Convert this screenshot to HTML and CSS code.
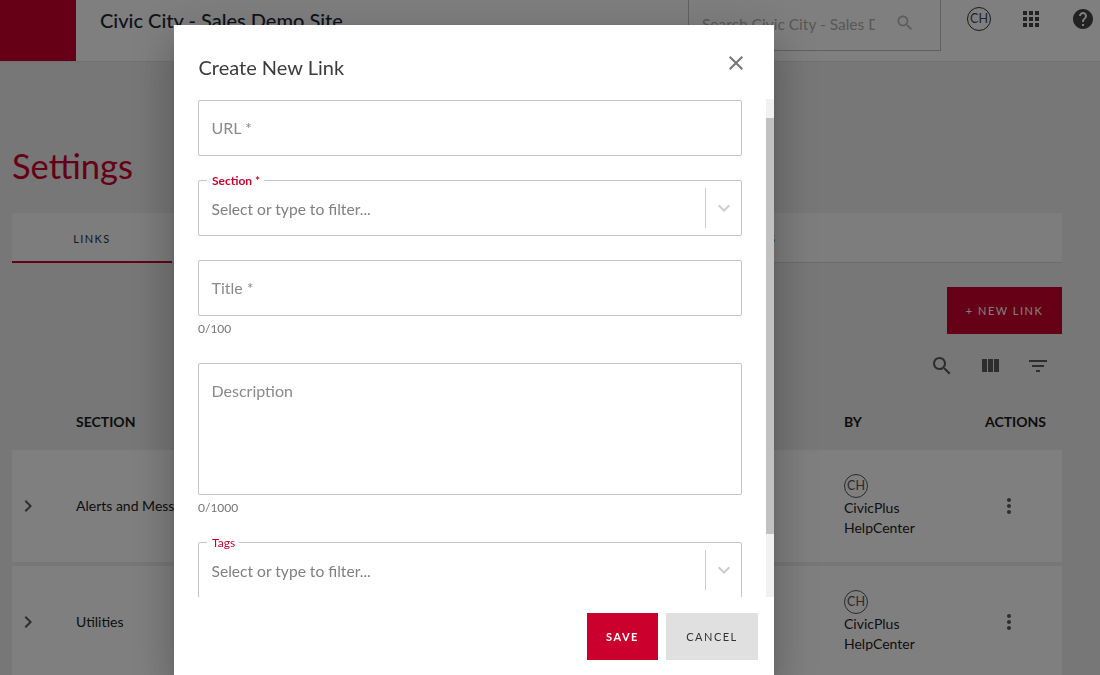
FILE: index.html
```html
<!DOCTYPE html>
<html lang="en">
<head>
<meta charset="utf-8">
<title>Settings</title>
<link rel="stylesheet" href="styles.css">
</head>
<body>
<div class="page">
  <header class="topbar">
    <div class="logo"></div>
    <div class="site-title">Civic City - Sales Demo Site</div>
    <div class="site-search">
      <span class="site-search-text">Search Civic City - Sales Demo Site</span>
      <svg class="icon icon-muted" viewBox="0 0 24 24"><path d="M15.5 14h-.79l-.28-.27C15.41 12.59 16 11.11 16 9.5 16 5.91 13.09 3 9.5 3S3 5.91 3 9.5 5.91 16 9.5 16c1.61 0 3.09-.59 4.23-1.57l.27.28v.79l5 4.99L20.49 19l-4.99-5zm-6 0C7.01 14 5 11.99 5 9.5S7.01 5 9.5 5 14 7.01 14 9.5 11.99 14 9.5 14z"/></svg>
    </div>
    <div class="avatar avatar-top">CH</div>
    <svg class="icon icon-apps" viewBox="0 0 24 24"><path d="M4 8h4V4H4v4zm6 12h4v-4h-4v4zm-6 0h4v-4H4v4zm0-6h4v-4H4v4zm6 0h4v-4h-4v4zm6-10v4h4V4h-4zm-6 4h4V4h-4v4zm6 6h4v-4h-4v4zm0 6h4v-4h-4v4z"/></svg>
    <svg class="icon icon-help" viewBox="0 0 24 24"><path d="M12 2C6.48 2 2 6.48 2 12s4.48 10 10 10 10-4.48 10-10S17.52 2 12 2zm1 17h-2v-2h2v2zm2.07-7.75l-.9.92C13.45 12.9 13 13.5 13 15h-2v-.5c0-1.1.45-2.1 1.17-2.83l1.24-1.26c.37-.36.59-.86.59-1.41 0-1.1-.9-2-2-2s-2 .9-2 2H8c0-2.21 1.79-4 4-4s4 1.79 4 4c0 .88-.36 1.68-.93 2.25z"/></svg>
  </header>

  <main class="content">
    <h1 class="page-title">Settings</h1>
    <nav class="tabs">
      <div class="tab tab-active">LINKS</div>
      <div class="tab tab-last">SECTIONS</div>
    </nav>
    <div class="action-row"><div class="new-link">+ NEW LINK</div></div>
    <div class="tools">
      <svg class="icon" viewBox="0 0 24 24"><path d="M15.5 14h-.79l-.28-.27C15.41 12.59 16 11.11 16 9.5 16 5.91 13.09 3 9.5 3S3 5.91 3 9.5 5.91 16 9.5 16c1.61 0 3.09-.59 4.23-1.57l.27.28v.79l5 4.99L20.49 19l-4.99-5zm-6 0C7.01 14 5 11.99 5 9.5S7.01 5 9.5 5 14 7.01 14 9.5 11.99 14 9.5 14z"/></svg>
      <svg class="icon" viewBox="0 0 24 24"><path d="M10 18h5V5h-5v13zm-6 0h5V5H4v13zM16 5v13h5V5h-5z"/></svg>
      <svg class="icon" viewBox="0 0 24 24"><path d="M10 18h4v-2h-4v2zM3 6v2h18V6H3zm3 7h12v-2H6v2z"/></svg>
    </div>
    <div class="grid-row table-head">
      <span></span>
      <span>SECTION</span>
      <span>BY</span>
      <span>ACTIONS</span>
    </div>
    <div class="grid-row card">
      <svg class="icon" viewBox="0 0 24 24"><path d="M10 6L8.59 7.41 13.17 12l-4.58 4.59L10 18l6-6z"/></svg>
      <span class="cell-text">Alerts and Messages</span>
      <div class="by"><div class="avatar">CH</div><div>CivicPlus</div><div>HelpCenter</div></div>
      <svg class="icon dots" viewBox="0 0 24 24"><path d="M12 8c1.1 0 2-.9 2-2s-.9-2-2-2-2 .9-2 2 .9 2 2 2zm0 2c-1.1 0-2 .9-2 2s.9 2 2 2 2-.9 2-2-.9-2-2-2zm0 6c-1.1 0-2 .9-2 2s.9 2 2 2 2-.9 2-2-.9-2-2-2z"/></svg>
    </div>
    <div class="grid-row card">
      <svg class="icon" viewBox="0 0 24 24"><path d="M10 6L8.59 7.41 13.17 12l-4.58 4.59L10 18l6-6z"/></svg>
      <span class="cell-text">Utilities</span>
      <div class="by"><div class="avatar">CH</div><div>CivicPlus</div><div>HelpCenter</div></div>
      <svg class="icon dots" viewBox="0 0 24 24"><path d="M12 8c1.1 0 2-.9 2-2s-.9-2-2-2-2 .9-2 2 .9 2 2 2zm0 2c-1.1 0-2 .9-2 2s.9 2 2 2 2-.9 2-2-.9-2-2-2zm0 6c-1.1 0-2 .9-2 2s.9 2 2 2 2-.9 2-2-.9-2-2-2z"/></svg>
    </div>
  </main>
</div>

<div class="scrim">
  <section class="modal">
    <div class="modal-head">
      <h2 class="modal-title">Create New Link</h2>
      <svg class="icon icon-close" viewBox="0 0 24 24"><path d="M19 6.41L17.59 5 12 10.59 6.41 5 5 6.41 10.59 12 5 17.59 6.41 19 12 13.41 17.59 19 19 17.59 13.41 12z"/></svg>
    </div>
    <div class="modal-body">
      <div class="form">
        <div class="box box-line">URL *</div>
        <fieldset class="select select-gap">
          <legend class="legend legend-strong">Section *</legend>
          <div class="select-inner">
            <span class="select-text">Select or type to filter...</span>
            <span class="select-sep"></span>
            <svg class="icon icon-chevron" viewBox="0 0 24 24"><path d="M16.59 8.59L12 13.17 7.41 8.59 6 10l6 6 6-6z"/></svg>
          </div>
        </fieldset>
        <div class="box box-line select-gap">Title *</div>
        <div class="count">0/100</div>
        <div class="box box-area">Description</div>
        <div class="count">0/1000</div>
        <fieldset class="select tags">
          <legend class="legend">Tags</legend>
          <div class="select-inner">
            <span class="select-text">Select or type to filter...</span>
            <span class="select-sep"></span>
            <svg class="icon icon-chevron" viewBox="0 0 24 24"><path d="M16.59 8.59L12 13.17 7.41 8.59 6 10l6 6 6-6z"/></svg>
          </div>
        </fieldset>
      </div>
      <div class="scroll-track"><div class="scroll-thumb"></div></div>
    </div>
    <div class="modal-foot">
      <div class="btn btn-save">SAVE</div>
      <div class="btn btn-cancel">CANCEL</div>
    </div>
  </section>
</div>
</body>
</html>
```
FILE: styles.css
```css
* { box-sizing: border-box; }
html, body { margin: 0; height: 100%; overflow: hidden; }
body { font-family: Lato, "Liberation Sans", sans-serif; background: #eeeeee; color: #212121; font-size: 14px; }
.icon { width: 24px; height: 24px; flex: none; display: block; fill: #5a5a5a; }

.topbar { display: flex; align-items: flex-start; height: 62px; background: #fff; border-bottom: 1px solid #e2e2e2; }
.logo { width: 76px; height: 61px; background: #cc002c; }
.site-title { margin-left: 24px; width: 588px; font-size: 20px; font-weight: 500; line-height: 40px; color: #1c2733; }
.site-search { width: 253px; height: 51px; border: 1px solid #c4c4c4; border-top: 0; display: flex; align-items: flex-start; padding: 12px 0 0 13px; }
.site-search-text { width: 173px; overflow: hidden; white-space: nowrap; font-size: 15.5px; line-height: 24px; color: #b0b0b0; }
.icon-muted { margin: 1px 0 0 20px; width: 20px; height: 20px; fill: #b8b8b8; }
.avatar { width: 24px; height: 24px; border: 1px solid #555; border-radius: 50%; font-size: 12.5px; line-height: 22px; text-align: center; color: #555; }
.avatar-top { margin: 7px 0 0 26px; color: #3a4a5a; border-color: #333; }
.icon-apps { margin: 7px 0 0 28px; fill: #444; }
.icon-help { margin: 7px 0 0 28px; fill: #444; }

.content { padding: 0 38px 0 12px; }
.page-title { margin: 0; padding-top: 82px; height: 151px; font-size: 34.5px; line-height: 44px; font-weight: 400; color: #cc002c; }
.tabs { display: flex; height: 50px; background: #fafafa; border-bottom: 1px solid #d8d8d8; }
.tab { font-size: 11px; letter-spacing: 1.4px; line-height: 52px; color: #26304a; }
.tab-active { width: 160px; height: 50px; text-align: center; border-bottom: 2px solid #cc002c; }
.tab-last { margin-left: 541px; color: #444; }
.action-row { display: flex; justify-content: flex-end; padding-top: 24px; }
.new-link { width: 115px; height: 47px; background: #cc002c; color: #fff; font-size: 11px; letter-spacing: 1.5px; line-height: 47px; text-align: center; }
.tools { display: flex; justify-content: flex-end; gap: 24px; padding: 20px 12px 0 0; }
.grid-row { display: grid; grid-template-columns: 64px 768px 141px 1fr; align-items: center; }
.table-head { height: 72px; padding-top: 14px; font-size: 14px; font-weight: 700; color: #1a1a1a; }
.card { height: 112px; background: #fff; margin-bottom: 4px; }
.card > .icon:first-child { margin-left: 4px; }
.cell-text { padding-bottom: 2px; }
.by { line-height: 20px; color: #222; }
.dots { margin-left: 12px; }

.scrim { position: fixed; inset: 0; background: rgba(0, 0, 0, 0.5); display: flex; align-items: flex-start; padding: 25px 0 0 174px; }
.modal { width: 600px; height: 650px; background: #fff; display: flex; flex-direction: column;
  box-shadow: 0 11px 15px -7px rgba(0,0,0,.2), 0 24px 38px 3px rgba(0,0,0,.14), 0 9px 46px 8px rgba(0,0,0,.12); }
.modal-head { height: 74px; flex: none; display: flex; justify-content: space-between; align-items: flex-start; padding: 0 26px 0 24px; }
.modal-title { margin: 29px 0 0 0.5px; font-size: 20px; line-height: 26px; font-weight: 400; color: #3c3c3c; }
.icon-close { margin-top: 26px; fill: #757575; }
.modal-body { height: 498px; flex: none; display: flex; }
.form { flex: 1; min-width: 0; overflow: hidden; padding: 1px 24px 0; }
.scroll-track { width: 8px; flex: none; background: #f1f1f1; padding-top: 19px; }
.scroll-thumb { height: 416px; background: #c1c1c1; }
.box { border: 1px solid #c4c4c4; border-radius: 2px; font-size: 16px; color: #8a8a8a; padding-left: 12.5px; }
.box-line { height: 56px; line-height: 54px; }
.box-area { height: 132px; margin-top: 27px; padding-top: 16px; line-height: 22px; }
.select-gap { margin-top: 24px; }
.select { margin-inline: 0; margin-block-end: 0; padding: 0; min-width: 0; height: 56px; border: 1px solid #c4c4c4; border-radius: 2px; }
.legend { margin-left: 8px; padding: 0 4px 0 5px; font-size: 12px; line-height: 0; height: 0; color: #cc002c; }
.legend-strong { font-weight: 700; }
.select-inner { display: flex; align-items: center; height: 54px; padding: 1px 5px 0 12.5px; }
.select-text { flex: 1; font-size: 15.6px; color: #808080; }
.select-sep { width: 1px; height: 40px; margin-top: -1px; background: #cccccc; }
.icon-chevron { margin: -1px 0 0 6px; fill: #cccccc; }
.count { font-size: 12px; line-height: 14px; margin-top: 6px; color: #757575; }
.tags { margin-top: 27px; }
.modal-foot { flex: none; display: flex; justify-content: flex-end; gap: 8px; padding: 16px 16px 0 0; }
.btn { height: 47px; font-size: 11px; letter-spacing: 1.5px; line-height: 47px; text-align: center; }
.btn-save { width: 71px; background: #cc002c; color: #fff; font-weight: 700; }
.btn-cancel { width: 92px; background: #e0e0e0; color: #333; }
```
